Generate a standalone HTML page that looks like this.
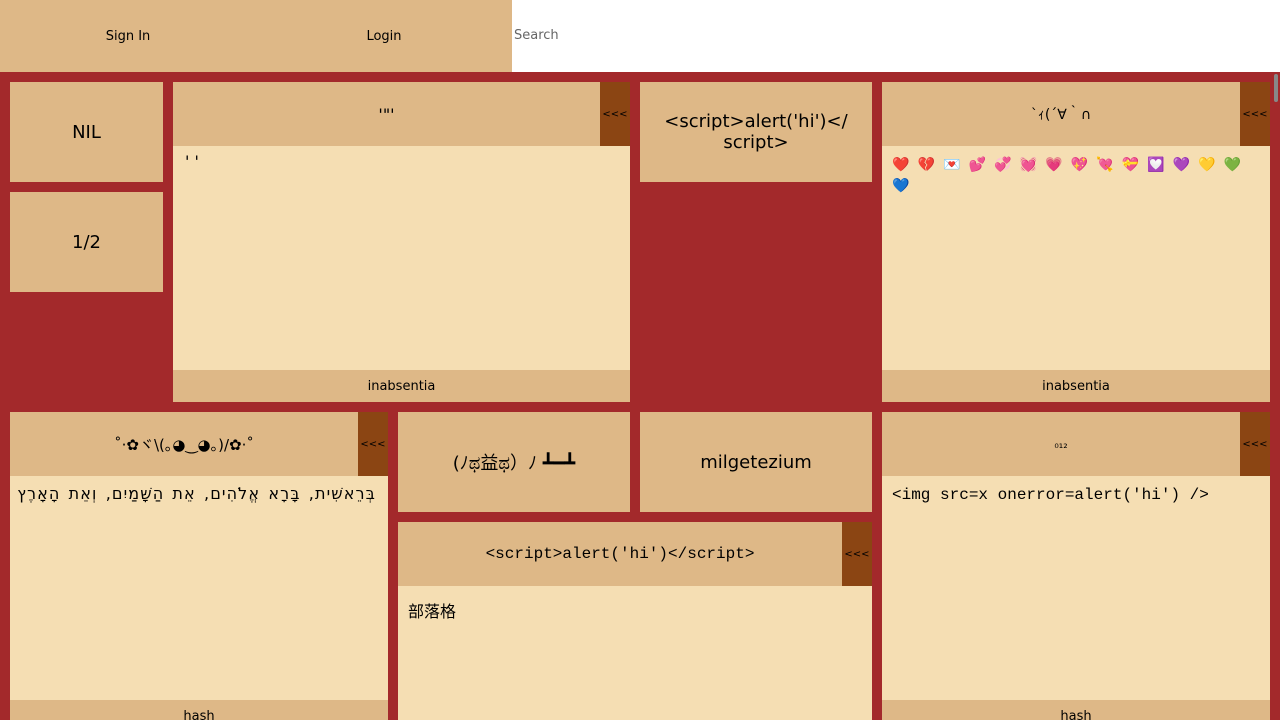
<!DOCTYPE html>
<html style="width:1280px;height:720px;overflow:hidden"><head><meta charset="utf-8"><style>
*{box-sizing:border-box;margin:0;padding:0}
body{width:1280px;height:720px;overflow:hidden;background:#a3292b;font-family:"DejaVu Sans","Liberation Sans","Noto Sans CJK SC",sans-serif;color:#000;position:relative}
.top{position:absolute;left:0;top:0;width:1280px;height:72px;background:#deb887}
.top .b{position:absolute;top:0;height:72px;width:256px;display:flex;align-items:center;justify-content:center;font-size:13px}
.search{position:absolute;left:512px;top:0;width:768px;height:72px;background:#fff;font-size:13px;color:#666;padding:28px 2px}
.box{position:absolute;background:#deb887;display:flex;align-items:center;justify-content:center;text-align:center;font-size:18px}
.card{position:absolute;background:#f5deb3;overflow:hidden}
.hd{position:absolute;left:0;top:0;right:30px;height:64px;background:#deb887;display:flex;align-items:center;justify-content:center;font-size:16px}
.ar{position:absolute;right:0;top:0;width:30px;height:64px;background:#8b4513;font-size:10px;display:flex;align-items:center;justify-content:center}
.bd{position:absolute;left:0;top:64px;right:0;padding:10px 10px;font-size:16px}
.ft{position:absolute;left:0;right:0;height:32px;background:#deb887;font-size:13px;display:flex;align-items:center;justify-content:center}
.mono{font-family:"Liberation Mono","DejaVu Sans Mono",monospace}
.em span{display:inline-block;width:25.5px;font-size:14px}
.sb{position:absolute;right:0;top:72px;width:8px;height:648px;background:#a3292b}
.sb i{position:absolute;left:2px;top:2px;width:4px;height:28px;background:#888;border-radius:2px}
</style></head><body>
<div class="top"><div class="b" style="left:0">Sign In</div><div class="b" style="left:256px">Login</div></div>
<div class="search">Search</div>

<div class="box" style="left:10px;top:82px;width:153px;height:100px">NIL</div>
<div class="box" style="left:10px;top:192px;width:153px;height:100px">1/2</div>

<div class="card" style="left:173px;top:82px;width:457px;height:320px">
<div class="hd">'"'</div><div class="ar">&lt;&lt;&lt;</div>
<div class="bd" style="padding:6px 12px">' '</div>
<div class="ft" style="top:288px">inabsentia</div></div>

<div class="box" style="left:640px;top:82px;width:232px;height:100px;padding:0 10px">&lt;script&gt;alert('hi')&lt;/ script&gt;</div>

<div class="card" style="left:882px;top:82px;width:388px;height:320px">
<div class="hd" style="font-size:14px">`ｨ(´∀｀∩</div><div class="ar">&lt;&lt;&lt;</div>
<div class="bd em" style="padding:8px 10px;line-height:19px;color:#e0313d"><span>❤️</span><span>💔</span><span>💌</span><span>💕</span><span>💞</span><span>💓</span><span>💗</span><span>💖</span><span>💘</span><span>💝</span><span>💟</span><span>💜</span><span>💛</span><span>💚</span><span>💙</span></div>
<div class="ft" style="top:288px">inabsentia</div></div>

<div class="card" style="left:10px;top:412px;width:378px;height:308px">
<div class="hd" style="font-size:15px">˚‧✿ヾ\(｡◕‿◕｡)/✿‧˚</div><div class="ar">&lt;&lt;&lt;</div>
<div class="bd" dir="rtl" style="padding:8px 12px;font-size:16px;letter-spacing:1.1px;word-spacing:2px;white-space:nowrap">בְּרֵאשִׁית, בָּרָא אֱלֹהִים, אֵת הַשָּׁמַיִם, וְאֵת הָאָרֶץ</div>
<div class="ft" style="top:288px">hash</div></div>

<div class="box" style="left:398px;top:412px;width:232px;height:100px">(ﾉಥ益ಥ）ﾉ ┻━┻</div>
<div class="box" style="left:640px;top:412px;width:232px;height:100px">milgetezium</div>

<div class="card" style="left:398px;top:522px;width:474px;height:198px">
<div class="hd mono">&lt;script&gt;alert('hi')&lt;/script&gt;</div><div class="ar">&lt;&lt;&lt;</div>
<div class="bd" style="font-family:'Noto Sans CJK SC',sans-serif;padding:12px 10px">部落格</div></div>

<div class="card" style="left:882px;top:412px;width:388px;height:308px">
<div class="hd" style="font-size:11px">₀₁₂</div><div class="ar">&lt;&lt;&lt;</div>
<div class="bd mono" style="padding:10px 10px">&lt;img src=x onerror=alert('hi') /&gt;</div>
<div class="ft" style="top:288px">hash</div></div>

<div class="sb"><i></i></div>
</body></html>
